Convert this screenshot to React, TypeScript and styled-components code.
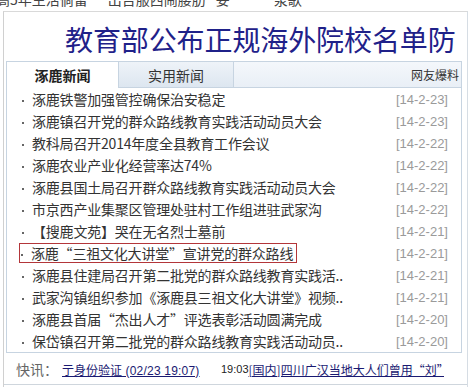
import React from 'react';
import styled, { createGlobalStyle } from 'styled-components';

const GlobalStyle = createGlobalStyle`
  html, body {
    margin: 0;
    padding: 0;
    background: #fff;
    overflow: hidden;
  }
  body {
    font-family: "Liberation Sans", "Noto Sans CJK SC", sans-serif;
    color: #333;
  }
`;

const CJK = `"Noto Sans CJK SC", "Liberation Sans", sans-serif`;

const TopStrip = styled.div`
  display: flex;
  align-items: flex-start;
  height: 11px;
  overflow: hidden;
  white-space: nowrap;
  font-family: ${CJK};
  font-size: 14px;
  line-height: 14px;
  color: #444;
`;

const StripText = styled.span<{ $left: number }>`
  flex-shrink: 0;
  margin-top: -8px;
  margin-left: ${p => p.$left}px;
`;

const Frame = styled.div`
  margin-left: 3px;
  height: 376px;
  border-top: 1px solid #d9d9d9;
  border-left: 1px solid #d0d0d0;
  border-right: 1px solid #d6dde4;
  width: 463px;
`;

const Headline = styled.h1`
  margin: 0;
  padding: 5px 0 0 61px;
  height: 44px;
  line-height: 44px;
  font-family: ${CJK};
  font-weight: 400;
  font-size: 28px;
  letter-spacing: -0.1px;
  color: #1f2189;
  white-space: nowrap;
`;

const Panel = styled.div`
  margin-left: 2px;
  width: 454px;
  border: 1px solid #c7d4e1;
`;

const TabBar = styled.div`
  display: flex;
  height: 25px;
  background: linear-gradient(#f4f7fb, #e9eff6);
  border-bottom: 1px solid #c7d4e1;
  font-family: ${CJK};
`;

const Tab = styled.div<{ $active?: boolean; $w: number }>`
  width: ${p => p.$w}px;
  display: flex;
  align-items: center;
  justify-content: center;
  font-size: 14px;
  font-weight: ${p => (p.$active ? 700 : 400)};
  color: ${p => (p.$active ? '#222' : '#333')};
  background: ${p => (p.$active ? '#fff' : 'linear-gradient(#eef3f8, #dde6f0)')};
  border-right: 1px solid #c7d4e1;
  margin-bottom: ${p => (p.$active ? '-1px' : '0')};
`;

const TabExtra = styled.div`
  margin-left: auto;
  padding-right: 2px;
  display: flex;
  align-items: center;
  font-size: 12px;
  color: #333;
`;

const List = styled.ul`
  list-style: none;
  margin: 0;
  padding: 0;
`;

const Row = styled.li`
  display: flex;
  align-items: center;
  height: 22px;
  padding: 0 13px 0 12px;
`;

const Title = styled.span<{ $boxed?: boolean }>`
  display: flex;
  align-items: center;
  height: 18px;
  padding: 0 ${p => (p.$boxed ? '3px' : '4px')} 0 ${p => (p.$boxed ? '0' : '1px')};
  border: 1px solid ${p => (p.$boxed ? '#b3363a' : 'transparent')};
  font-family: ${CJK};
  font-size: 14px;
  letter-spacing: -0.2px;
  color: #333;
  white-space: nowrap;
`;

const Dot = styled.i`
  display: inline-block;
  width: 2px;
  height: 2px;
  margin: 3px 8px 0 1px;
  background: #666;
`;

const DateText = styled.span`
  margin-left: auto;
  font-size: 13px;
  color: #9a9a9a;
  font-family: "Liberation Sans", sans-serif;
`;

const Footer = styled.div`
  display: flex;
  align-items: center;
  height: 30px;
  margin-top: 1px;
  border-bottom: 1px solid #cfd6dd;
  padding-left: 12px;
  white-space: nowrap;
  overflow: hidden;
`;

const FooterLabel = styled.span`
  flex-shrink: 0;
  font-family: ${CJK};
  font-size: 14px;
  color: #666;
  width: 46px;
`;

const Ticker = styled.div`
  width: 382px;
  flex-shrink: 0;
  overflow: hidden;
  display: grid;
  grid-template-columns: 159px auto 1fr;
  align-items: center;
  font-size: 12px;
`;

const NewsLink = styled.a`
  justify-self: start;
  white-space: nowrap;
  color: #1a1a72;
  text-decoration: underline;
  font-family: ${CJK};
  font-size: 12px;
`;

const Stamp = styled.span`
  font-family: "Liberation Sans", sans-serif;
  letter-spacing: 0.2px;
`;

const Time = styled.span`
  font-family: "Liberation Sans", sans-serif;
  font-size: 11px;
  color: #222;
`;

const news: { title: string; date: string; boxed?: boolean }[] = [
  { title: '涿鹿铁警加强管控确保治安稳定', date: '[14-2-23]' },
  { title: '涿鹿镇召开党的群众路线教育实践活动动员大会', date: '[14-2-23]' },
  { title: '教科局召开2014年度全县教育工作会议', date: '[14-2-22]' },
  { title: '涿鹿农业产业化经营率达74%', date: '[14-2-22]' },
  { title: '涿鹿县国土局召开群众路线教育实践活动动员大会', date: '[14-2-22]' },
  { title: '市京西产业集聚区管理处驻村工作组进驻武家沟', date: '[14-2-22]' },
  { title: '【搜鹿文苑】哭在无名烈士墓前', date: '[14-2-21]' },
  { title: '涿鹿“三祖文化大讲堂”宣讲党的群众路线', date: '[14-2-21]', boxed: true },
  { title: '涿鹿县住建局召开第二批党的群众路线教育实践活..', date: '[14-2-21]' },
  { title: '武家沟镇组织参加《涿鹿县三祖文化大讲堂》视频..', date: '[14-2-21]' },
  { title: '涿鹿县首届“杰出人才”评选表彰活动圆满完成', date: '[14-2-20]' },
  { title: '保岱镇召开第二批党的群众路线教育实践活动动员..', date: '[14-2-20]' },
];

export default function App() {
  return (
    <>
      <GlobalStyle />
      <TopStrip>
        <StripText $left={-4}>高5年生活倘留</StripText>
        <StripText $left={20}>出台服西闹腰肪</StripText>
        <StripText $left={10}>妥</StripText>
        <StripText $left={44}>泵歌</StripText>
      </TopStrip>
      <Frame>
        <Headline>教育部公布正规海外院校名单防</Headline>
        <Panel>
          <TabBar>
            <Tab $active $w={111}>涿鹿新闻</Tab>
            <Tab $w={114}>实用新闻</Tab>
            <TabExtra>网友爆料</TabExtra>
          </TabBar>
          <List>
            {news.map(n => (
              <Row key={n.title}>
                <Title $boxed={n.boxed}>
                  <Dot />
                  {n.title}
                </Title>
                <DateText>{n.date}</DateText>
              </Row>
            ))}
          </List>
        </Panel>
        <Footer>
          <FooterLabel>快讯：</FooterLabel>
          <Ticker>
            <NewsLink href="#">
              亍身份验证<Stamp> (02/23 19:07)</Stamp>
            </NewsLink>
            <Time>19:03</Time>
            <NewsLink href="#">[国内]四川广汉当地大人们曾用“刘”</NewsLink>
          </Ticker>
        </Footer>
      </Frame>
    </>
  );
}
